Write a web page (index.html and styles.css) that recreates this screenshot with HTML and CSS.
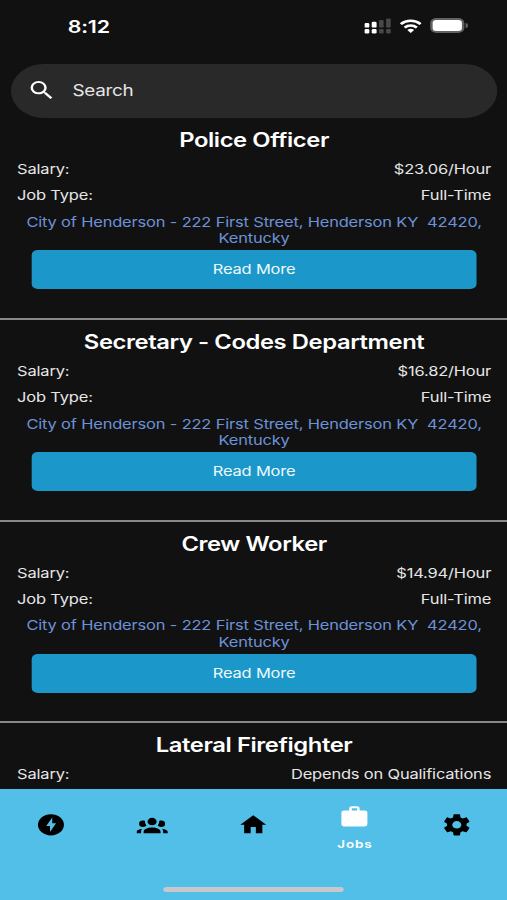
FILE: index.html
```html
<!DOCTYPE html>
<html lang="en">
<head>
    <meta charset="UTF-8">
    <meta name="viewport" content="width=device-width, initial-scale=1.0">
    <title>Jobs</title>
    <link rel="stylesheet" href="styles.css">
</head>
<body>
    <div class="screen">
        <header class="status-bar">
            <span class="time">8:12</span>
            <div class="status-icons">
                <svg class="signal" viewBox="0 0 22 16">
                    <g fill="#fff">
                        <rect x="0" y="5" width="4" height="4.6" rx="1.2"/>
                        <rect x="0" y="11" width="4" height="4.4" rx="1.2"/>
                        <rect x="6" y="3.8" width="4" height="5.8" rx="1.2"/>
                        <rect x="6" y="11" width="4" height="4.4" rx="1.2"/>
                    </g>
                    <g fill="#48484a">
                        <rect x="12" y="2" width="3.8" height="7.6" rx="1.2"/>
                        <rect x="12" y="11" width="3.8" height="4.4" rx="1.2"/>
                        <rect x="17.8" y="0.4" width="3.8" height="9.2" rx="1.2"/>
                        <rect x="17.8" y="11" width="3.8" height="4.4" rx="1.2"/>
                    </g>
                </svg>
                <svg class="wifi" viewBox="0 0 18 14">
                    <g fill="none" stroke="#fff" stroke-width="2.5">
                        <path d="M0.9 5.1a11.6 11.6 0 0 1 16.2 0"/>
                        <path d="M4 8.6a7.2 7.2 0 0 1 10 0"/>
                    </g>
                    <path fill="#fff" d="M9 14l-2.8-2.9a4 4 0 0 1 5.6 0z"/>
                </svg>
                <div class="battery"><div class="battery-level"></div></div>
                <div class="battery-tip"></div>
            </div>
        </header>

        <div class="search-bar">
            <svg class="search-icon" viewBox="0 0 24 24"><path d="M15.5 14h-.79l-.28-.27A6.47 6.47 0 0 0 16 9.5 6.5 6.5 0 1 0 9.5 16c1.61 0 3.09-.59 4.23-1.57l.27.28v.79l5 4.99L20.49 19l-4.99-5zm-6 0C7.01 14 5 11.99 5 9.5S7.01 5 9.5 5 14 7.01 14 9.5 11.99 14 9.5 14z"/></svg>
            <span>Search</span>
        </div>

        <main class="job-list">
            <div class="job">
                <h2>Police Officer</h2>
                <div class="job-row"><span>Salary:</span><span>$23.06/Hour</span></div>
                <div class="job-row"><span>Job Type:</span><span>Full-Time</span></div>
                <a class="job-address">City of Henderson - 222 First Street, Henderson KY&nbsp; 42420,<br>Kentucky</a>
                <div class="read-more">Read More</div>
            </div>
            <div class="job">
                <h2>Secretary - Codes Department</h2>
                <div class="job-row"><span>Salary:</span><span>$16.82/Hour</span></div>
                <div class="job-row"><span>Job Type:</span><span>Full-Time</span></div>
                <a class="job-address">City of Henderson - 222 First Street, Henderson KY&nbsp; 42420,<br>Kentucky</a>
                <div class="read-more">Read More</div>
            </div>
            <div class="job">
                <h2>Crew Worker</h2>
                <div class="job-row"><span>Salary:</span><span>$14.94/Hour</span></div>
                <div class="job-row"><span>Job Type:</span><span>Full-Time</span></div>
                <a class="job-address">City of Henderson - 222 First Street, Henderson KY&nbsp; 42420,<br>Kentucky</a>
                <div class="read-more">Read More</div>
            </div>
            <div class="job">
                <h2>Lateral Firefighter</h2>
                <div class="job-row"><span>Salary:</span><span>Depends on Qualifications</span></div>
            </div>
        </main>

        <nav class="tab-bar">
            <div class="tabs">
                <div class="tab">
                    <svg viewBox="0 0 24 24"><path fill-rule="evenodd" d="M12 2a10 10 0 1 0 0 20 10 10 0 0 0 0-20zM13 5.2v5.3h2.9l-4.6 8.3v-5.6H8.4z"/></svg>
                </div>
                <div class="tab">
                    <svg viewBox="0 0 24 24"><path d="M12,5.5A3.5,3.5 0 0,1 15.5,9A3.5,3.5 0 0,1 12,12.5A3.5,3.5 0 0,1 8.5,9A3.5,3.5 0 0,1 12,5.5M5,8C5.56,8 6.08,8.15 6.53,8.42C6.38,9.85 6.8,11.27 7.66,12.38C7.16,13.34 6.16,14 5,14A3,3 0 0,1 2,11A3,3 0 0,1 5,8M19,8A3,3 0 0,1 22,11A3,3 0 0,1 19,14C17.84,14 16.84,13.34 16.34,12.38C17.2,11.27 17.62,9.85 17.47,8.42C17.92,8.15 18.44,8 19,8M5.5,18.25C5.5,16.18 8.41,14.5 12,14.5C15.59,14.5 18.5,16.18 18.5,18.25V20H5.5V18.25M0,20V18.5C0,17.11 1.89,15.94 4.45,15.6C3.86,16.28 3.5,17.22 3.5,18.25V20H0M24,20H20.5V18.25C20.5,17.22 20.14,16.28 19.55,15.6C22.11,15.94 24,17.11 24,18.5V20Z"/></svg>
                </div>
                <div class="tab">
                    <svg viewBox="0 0 24 24"><path d="M10,20V14H14V20H19V12H22L12,3L2,12H5V20H10Z"/></svg>
                </div>
                <div class="tab active">
                    <svg viewBox="0 0 24 24"><path d="M10,2H14A2,2 0 0,1 16,4V6H20A2,2 0 0,1 22,8V19A2,2 0 0,1 20,21H4C2.89,21 2,20.1 2,19V8C2,6.89 2.89,6 4,6H8V4C8,2.89 8.89,2 10,2M14,6V4H10V6H14Z"/></svg>
                    <span>Jobs</span>
                </div>
                <div class="tab">
                    <svg viewBox="0 0 24 24"><path d="M12,15.5A3.5,3.5 0 0,1 8.5,12A3.5,3.5 0 0,1 12,8.5A3.5,3.5 0 0,1 15.5,12A3.5,3.5 0 0,1 12,15.5M19.43,12.97C19.47,12.65 19.5,12.33 19.5,12C19.5,11.67 19.47,11.34 19.43,11L21.54,9.37C21.73,9.22 21.78,8.95 21.66,8.73L19.66,5.27C19.54,5.05 19.27,4.96 19.05,5.05L16.56,6.05C16.04,5.66 15.5,5.32 14.87,5.07L14.5,2.42C14.46,2.18 14.25,2 14,2H10C9.75,2 9.54,2.18 9.5,2.42L9.13,5.07C8.5,5.32 7.96,5.66 7.44,6.05L4.95,5.05C4.73,4.96 4.46,5.05 4.34,5.27L2.34,8.73C2.21,8.95 2.27,9.22 2.46,9.37L4.57,11C4.53,11.34 4.5,11.67 4.5,12C4.5,12.33 4.53,12.65 4.57,12.97L2.46,14.63C2.27,14.78 2.21,15.05 2.34,15.27L4.34,18.73C4.46,18.95 4.73,19.03 4.95,18.95L7.44,17.94C7.96,18.34 8.5,18.68 9.13,18.93L9.5,21.58C9.54,21.82 9.75,22 10,22H14C14.25,22 14.46,21.82 14.5,21.58L14.87,18.93C15.5,18.67 16.04,18.34 16.56,17.94L19.05,18.95C19.27,19.03 19.54,18.95 19.66,18.73L21.66,15.27C21.78,15.05 21.73,14.78 21.54,14.63L19.43,12.97Z"/></svg>
                </div>
            </div>
            <div class="home-indicator"></div>
        </nav>
    </div>
</body>
</html>
```

FILE: styles.css
```css
* {
    box-sizing: border-box;
}
body {
    margin: 0;
    background-color: #111;
    font-family: Inter, "Liberation Sans", sans-serif;
    color: #e6e6e6;
    overflow: hidden;
}
/* 416px layout, widened to fill the 507px viewport */
.screen {
    display: flex;
    flex-direction: column;
    width: 416px;
    height: 900px;
    transform: scaleX(1.21875);
    transform-origin: 0 0;
}
.status-bar {
    display: flex;
    justify-content: space-between;
    align-items: flex-start;
    height: 63.5px;
    padding: 15px 32px 0 55.5px;
    flex-shrink: 0;
}
.time {
    font-size: 17.5px;
    line-height: 23px;
    font-weight: 600;
    letter-spacing: -0.1px;
    color: #fff;
}
.status-icons {
    display: flex;
    align-items: center;
    height: 21px;
}
.signal {
    width: 22px;
    height: 16px;
    margin-right: 7px;
}
.wifi {
    width: 18px;
    height: 14px;
    margin-right: 7px;
}
.battery {
    width: 28px;
    height: 15px;
    padding: 2px;
    border-radius: 5px;
    background-color: #626264;
}
.battery-level {
    height: 11px;
    border-radius: 3px;
    background-color: #fff;
}
.battery-tip {
    width: 2px;
    height: 5px;
    margin-left: 1px;
    border-radius: 0 2px 2px 0;
    background-color: #626264;
}
.search-bar {
    display: flex;
    align-items: center;
    height: 54px;
    margin: 0 8.5px 0 9px;
    padding-left: 12.5px;
    border-radius: 27px;
    background-color: #292929;
    font-size: 15.5px;
    letter-spacing: -0.25px;
    flex-shrink: 0;
}
.search-icon {
    width: 24.5px;
    height: 24.5px;
    margin-right: 13.5px;
    fill: #fff;
}
.job-list {
    flex: 1;
    min-height: 0;
    padding-top: 0.5px;
    overflow: hidden;
}
.job {
    height: 201.75px;
    padding: 10px 13px 0 14px;
    border-bottom: 2px solid #888;
    font-size: 13.5px;
    line-height: 16.5px;
    letter-spacing: -0.14px;
}
.job h2 {
    margin: 0 0 9px;
    font-size: 19.5px;
    line-height: 24px;
    font-weight: 600;
    letter-spacing: -0.33px;
    text-align: center;
    color: #fff;
}
.job-row {
    display: flex;
    justify-content: space-between;
    margin-bottom: 9.7px;
}
.job-address {
    display: block;
    padding-top: 0.5px;
    text-align: center;
    white-space: nowrap;
    color: #6d92d8;
}
.read-more {
    height: 39px;
    margin: 3.5px 12px 0;
    border-radius: 5px;
    background-color: #1b98c9;
    color: #eef8fc;
    line-height: 39px;
    text-align: center;
}
.tab-bar {
    height: 111px;
    background-color: #52bfe8;
    flex-shrink: 0;
}
.tabs {
    display: flex;
    height: 71px;
}
.tab {
    display: flex;
    flex: 1;
    flex-direction: column;
    align-items: center;
    justify-content: center;
}
.tab svg {
    width: 25.6px;
    height: 25.6px;
}
.tab.active {
    color: #fff;
    font-size: 11px;
    line-height: 14px;
    font-weight: 600;
    letter-spacing: 0.7px;
    padding-top: 6px;
}
.tab.active svg {
    margin-bottom: 7px;
    fill: #fff;
}
.home-indicator {
    width: 148px;
    height: 5px;
    margin: 27px auto 0;
    border-radius: 3px;
    background-color: #c8c8cc;
}
```
